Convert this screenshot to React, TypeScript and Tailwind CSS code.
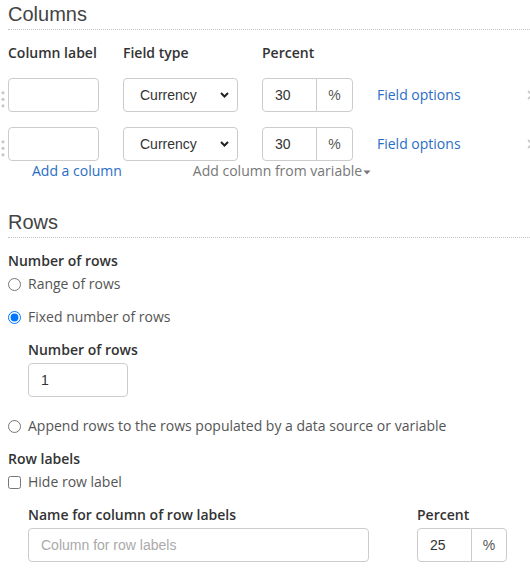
import React from "react";

const label = "font-semibold text-[14px] leading-[20px] text-[#333]";
const inputBox =
  "h-[34px] border border-[#ccc] bg-white flex items-center font-['Liberation_Sans',Arial,sans-serif] text-[14px] text-[#333]";
const link = "text-[14px] leading-[20px] text-[#2a6dc5]";
const body = "text-[14px] leading-[20px] text-[#555]";

function Handle() {
  return (
    <div className="w-[8px] h-[34px] flex items-end pb-[4px]">
      <svg width="6" height="17" viewBox="0 0 6 17" className="block">
        <circle cx="3" cy="1.8" r="1.6" fill="#c8c8c8" />
        <circle cx="3" cy="8.3" r="1.6" fill="#c8c8c8" />
        <circle cx="3" cy="14.8" r="1.6" fill="#c8c8c8" />
      </svg>
    </div>
  );
}

function Chevron() {
  return (
    <svg width="9" height="6" viewBox="0 0 9 6" className="block">
      <path d="M1 1 L4.5 4.5 L8 1" fill="none" stroke="#222" strokeWidth="2" />
    </svg>
  );
}

function PercentGroup({ value, inputW, addonW }: { value: string; inputW: string; addonW: string }) {
  return (
    <div className="flex">
      <div className={`${inputBox} ${inputW} rounded-l-[4px] pl-3`}>{value}</div>
      <div
        className={`${inputBox} ${addonW} -ml-px rounded-r-[4px] bg-[#eee] justify-center text-[#555]`}
      >
        %
      </div>
    </div>
  );
}

function ColumnRow({ mt }: { mt: string }) {
  return (
    <div className={`flex items-center w-[530px] -ml-2 ${mt}`}>
      <Handle />
      <div className={`${inputBox} w-[91px] rounded-[4px]`} />
      <div className={`${inputBox} w-[115px] ml-[24px] rounded-[4px] pl-4 pr-[8px] justify-between`}>
        <span>Currency</span>
        <Chevron />
      </div>
      <div className="ml-[24px]">
        <PercentGroup value="30" inputW="w-[55px]" addonW="w-[37px]" />
      </div>
      <span className={`${link} ml-[24px]`}>Field options</span>
      <div className="ml-auto -mr-[7px]">
        <svg width="10" height="10" viewBox="0 0 10 10" className="block">
          <path d="M1 1 L9 9 M9 1 L1 9" stroke="#c4c4c4" strokeWidth="1.6" />
        </svg>
      </div>
    </div>
  );
}

function Radio({ checked, text, mt }: { checked?: boolean; text: string; mt: string }) {
  return (
    <label className={`flex items-center h-[20px] ${mt}`}>
      <input type="radio" name="rows" defaultChecked={checked} className="m-0 w-[13px] h-[13px]" />
      <span className={`${body} ml-[7px]`}>{text}</span>
    </label>
  );
}

export default function App() {
  return (
    <div className="w-[530px] h-[586px] overflow-hidden bg-white pl-2 font-['Open_Sans',sans-serif]">
      <h2 className="font-['Liberation_Sans',Arial,sans-serif] text-[20px] leading-[29px] text-[#444] border-b border-dotted border-[#c4c4c4] font-normal">
        Columns
      </h2>

      <div className={`flex mt-[13px] ${label}`}>
        <span className="w-[91px]">Column label</span>
        <span className="w-[115px] ml-[24px]">Field type</span>
        <span className="ml-[24px]">Percent</span>
      </div>

      <ColumnRow mt="mt-[15px]" />
      <ColumnRow mt="mt-[15px]" />

      <div className="flex items-center h-[20px]">
        <span className={`${link} ml-[24px]`}>Add a column</span>
        <span className="flex items-center ml-[71px] text-[14px] leading-[20px] text-[#777]">
          Add column from variable
          <svg width="8" height="5" viewBox="0 0 8 5" className="block ml-[1px] mt-[3px]">
            <path d="M0.5 0.5 L7.5 0.5 L4 4.5 Z" fill="#777" />
          </svg>
        </span>
      </div>

      <h2 className="mt-[27px] font-['Liberation_Sans',Arial,sans-serif] text-[20px] leading-[29px] text-[#444] border-b border-dotted border-[#c4c4c4] font-normal">
        Rows
      </h2>

      <div className={`mt-[13px] ${label}`}>Number of rows</div>
      <Radio text="Range of rows" mt="mt-[3px]" />
      <Radio text="Fixed number of rows" checked mt="mt-[13px]" />

      <div className="pl-5">
        <div className={`mt-[13px] ${label}`}>Number of rows</div>
        <div className={`${inputBox} mt-[3px] w-[100px] rounded-[4px] pl-3`}>1</div>
      </div>

      <Radio text="Append rows to the rows populated by a data source or variable" mt="mt-[19px]" />

      <div className={`mt-[13px] ${label}`}>Row labels</div>
      <label className="flex items-center h-[20px] mt-[3px]">
        <input type="checkbox" className="m-0 w-[13px] h-[13px]" />
        <span className={`${body} ml-[7px]`}>Hide row label</span>
      </label>

      <div className="pl-5 flex">
        <div className="w-[341px]">
          <div className={`mt-[13px] ${label}`}>Name for column of row labels</div>
          <div className={`${inputBox} mt-[3px] w-[341px] rounded-[4px] pl-3 text-[#aaa]`}>
            Column for row labels
          </div>
        </div>
        <div className="ml-[48px]">
          <div className={`mt-[13px] ${label}`}>Percent</div>
          <div className="mt-[3px]">
            <PercentGroup value="25" inputW="w-[55px]" addonW="w-[36px]" />
          </div>
        </div>
      </div>

      <div className={`pl-5 mt-[20px] ${label}`}>Row label width</div>
    </div>
  );
}
